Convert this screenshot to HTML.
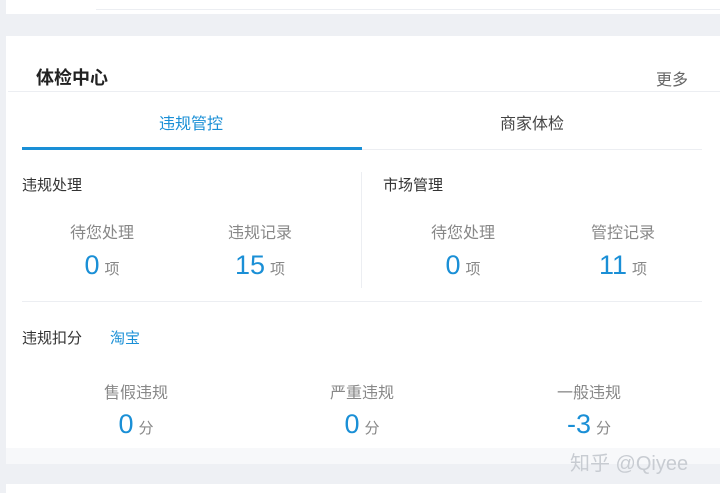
<!DOCTYPE html>
<html><head><meta charset="utf-8"><style>
*{margin:0;padding:0;box-sizing:border-box}
body{width:720px;height:493px;background:#eef0f4;position:relative;overflow:hidden;font-family:"Liberation Sans","Noto Sans CJK SC",sans-serif;color:#333}
.a{position:absolute}
.lbl{position:absolute;font-size:16px;color:#888;width:160px;text-align:center}
.num{position:absolute;width:160px;text-align:center;color:#1a8fd6;font-size:27px;white-space:nowrap}
.num span{font-size:15px;color:#888;margin-left:5px}
</style></head><body>
<div class="a" style="left:6px;top:0;width:714px;height:14px;background:#fff"></div>
<div class="a" style="left:96px;top:9px;width:624px;height:1px;background:#eceef2"></div>
<div class="a" style="left:6px;top:36px;width:714px;height:412px;background:#fff"></div>
<div class="a" style="left:6px;top:448px;width:714px;height:16px;background:#f7f8fa"></div>
<div class="a" style="left:6px;top:484px;width:714px;height:9px;background:#fff"></div>
<div class="a" style="left:36px;top:64px;font-size:18px;font-weight:bold;color:#222">体检中心</div>
<div class="a" style="left:656px;top:66px;font-size:16px;color:#666">更多</div>
<div class="a" style="left:8px;top:91px;width:712px;height:1px;background:#eceef2"></div>
<div class="a" style="left:159px;top:110px;font-size:16px;color:#1a8fd6">违规管控</div>
<div class="a" style="left:500px;top:110px;font-size:16px;color:#444">商家体检</div>
<div class="a" style="left:22px;top:149px;width:680px;height:1px;background:#eceef2"></div>
<div class="a" style="left:22px;top:147px;width:340px;height:3px;background:#1a8fd6"></div>
<div class="a" style="left:22px;top:174px;font-size:15px;color:#333">违规处理</div>
<div class="a" style="left:383px;top:174px;font-size:15px;color:#333">市场管理</div>
<div class="a" style="left:361px;top:172px;width:1px;height:116px;background:#eceef2"></div>
<div class="lbl" style="left:22px;top:219px">待您处理</div>
<div class="lbl" style="left:180px;top:219px">违规记录</div>
<div class="lbl" style="left:383px;top:219px">待您处理</div>
<div class="lbl" style="left:543px;top:219px">管控记录</div>
<div class="num" style="left:22px;top:250px">0<span>项</span></div>
<div class="num" style="left:180px;top:250px">15<span>项</span></div>
<div class="num" style="left:383px;top:250px">0<span>项</span></div>
<div class="num" style="left:543px;top:250px">11<span>项</span></div>
<div class="a" style="left:22px;top:301px;width:680px;height:1px;background:#eceef2"></div>
<div class="a" style="left:22px;top:327px;font-size:15px;color:#333">违规扣分</div>
<div class="a" style="left:110px;top:327px;font-size:15px;color:#1a8fd6">淘宝</div>
<div class="lbl" style="left:56px;top:379px">售假违规</div>
<div class="lbl" style="left:282px;top:379px">严重违规</div>
<div class="lbl" style="left:509px;top:379px">一般违规</div>
<div class="num" style="left:56px;top:409px">0<span>分</span></div>
<div class="num" style="left:282px;top:409px">0<span>分</span></div>
<div class="num" style="left:509px;top:409px">-3<span>分</span></div>
<div class="a" style="left:570px;top:447px;font-size:20px;color:#c8ccd2;white-space:nowrap">知乎 @Qiyee</div>
</body></html>
